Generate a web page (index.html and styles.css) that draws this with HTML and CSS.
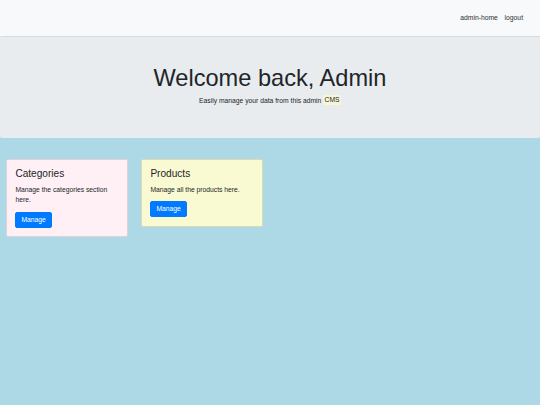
FILE: index.html
```html
<!DOCTYPE html>
<html lang="en">
<head>
<meta charset="utf-8">
<title>Admin</title>
<link rel="stylesheet" href="styles.css">
</head>
<body>
<nav class="navbar">
  <ul class="nav-links">
    <li><a class="nav-link" href="#">admin-home</a></li>
    <li><a class="nav-link" href="#">logout</a></li>
  </ul>
</nav>
<header class="jumbotron">
  <h1 class="display">Welcome back, Admin</h1>
  <p class="lead">Easily manage your data from this admin <mark class="tag">CMS</mark></p>
</header>
<main class="cards">
  <section class="card card-pink">
    <h4 class="card-title">Categories</h4>
    <p class="card-text">Manage the categories section here.</p>
    <a class="btn" href="#">Manage</a>
  </section>
  <section class="card card-yellow">
    <h4 class="card-title">Products</h4>
    <p class="card-text">Manage all the products here.</p>
    <a class="btn" href="#">Manage</a>
  </section>
</main>
</body>
</html>
```

FILE: styles.css
```css
html, body {
  margin: 0;
  padding: 0;
}
body {
  background: #add8e6;
  min-height: 100vh;
  font-family: "Liberation Sans", Arial, Helvetica, sans-serif;
  font-size: 6.75px;
  line-height: 1.5;
  color: #212529;
}
.navbar {
  height: 36px;
  background: #f8f9fa;
  display: flex;
  justify-content: flex-end;
  align-items: center;
  padding-right: 13.6px;
  box-shadow: 0 0.5px 1px rgba(0, 0, 0, 0.08);
  position: relative;
  z-index: 1;
}
.nav-links {
  list-style: none;
  margin: 0;
  padding: 0;
  display: flex;
}
.nav-link {
  display: block;
  padding: 0 3.4px;
  color: #2b2f33;
  text-decoration: none;
}
.jumbotron {
  background: #e9ecef;
  text-align: center;
  padding: 28.4px 14px 32px;
  border-radius: 0 0 2px 2px;
}
.display {
  font-size: 23.6px;
  font-weight: 400;
  line-height: 1.2;
  margin: 0 0 3px;
}
.lead {
  margin: 0;
}
.tag {
  background: #f8f4d6;
  color: #212529;
  padding: 0.2em;
}
.cards {
  display: flex;
  align-items: flex-start;
  gap: 13px;
  padding: 21px 0 0 6px;
}
.card {
  width: 122px;
  box-sizing: border-box;
  border: 1px solid rgba(0, 0, 0, 0.125);
  border-radius: 2px;
  padding: 8.4px;
}
.card-pink {
  background: #fff0f5;
}
.card-yellow {
  background: #fafad2;
}
.card-title {
  font-size: 10.1px;
  font-weight: 400;
  line-height: 1.2;
  margin: 0 0 4.5px;
}
.card-text {
  margin: 0 0 6.5px;
}
.btn {
  display: inline-block;
  background: #007bff;
  border: 1px solid #007bff;
  color: #fff;
  text-decoration: none;
  padding: 2px 5px;
  line-height: 10px;
  border-radius: 2px;
}
```
